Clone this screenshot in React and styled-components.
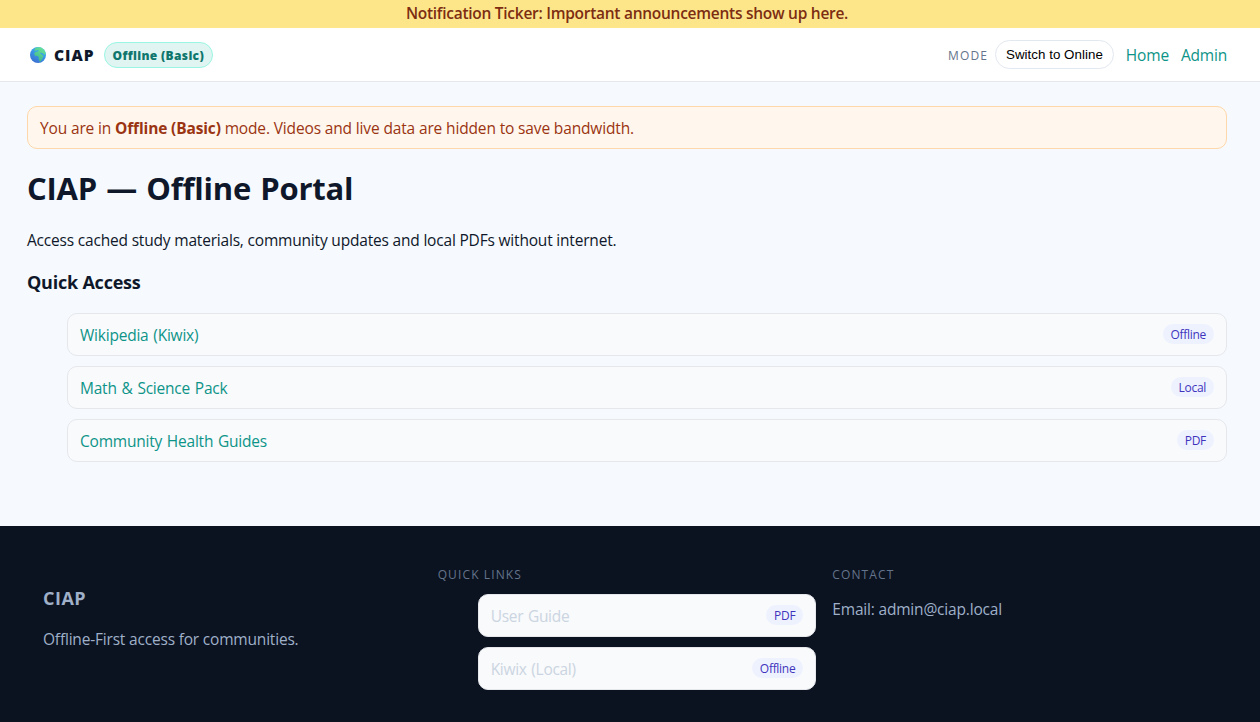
import React from 'react';
import styled, { createGlobalStyle } from 'styled-components';

const GlobalStyle = createGlobalStyle`
  * { box-sizing: border-box; }
  body {
    margin: 0;
    background: #f6fafe;
    color: #0f172a;
    font: 15.5px/21px "Segoe UI", "Open Sans", "Noto Sans", sans-serif;
    letter-spacing: -0.19px;
  }
  h1, h3, p, ul { margin: 0; padding: 0; }
  ul { list-style: none; }
  a { text-decoration: none; }
`;

const Page = styled.div`
  height: 722px;
  display: flex;
  flex-direction: column;
  overflow: hidden;
  white-space: nowrap;
`;

const Ticker = styled.div`
  height: 28px;
  padding: 0 6px 3px 0;
  display: flex;
  align-items: center;
  justify-content: center;
  background: #fde68a;
  color: #7c2d12;
  font-weight: 600;
  line-height: 22px;
  letter-spacing: -0.27px;
`;

const Header = styled.header`
  height: 54px;
  padding: 0 33px 0 27px;
  display: flex;
  align-items: center;
  justify-content: space-between;
  background: #fff;
  border-bottom: 1px solid #e5e7eb;
`;

const Brand = styled.div`
  display: flex;
  align-items: center;
  gap: 9px;
  padding-left: 3px;
`;

const BrandName = styled.div`
  display: flex;
  align-items: center;
  gap: 8px;
  font-weight: 800;
  letter-spacing: 1px;

  span { padding-top: 2px; }
`;

const Globe = styled.svg`
  width: 16px;
  height: 16px;
  display: block;
`;

const ModeBadge = styled.span`
  height: 26px;
  padding: 1px 8px 0;
  border: 1px solid #99f6e4;
  border-radius: 999px;
  background: #e0f5f1;
  color: #0f766e;
  font-size: 12px;
  font-weight: 800;
  line-height: 24px;
  letter-spacing: 0.33px;
`;

const Nav = styled.nav`
  display: flex;
  align-items: center;
  gap: 12px;
`;

const ModeGroup = styled.div`
  display: flex;
  align-items: center;
  gap: 7px;
`;

const Eyebrow = styled.div`
  color: #64748b;
  font-size: 12px;
  line-height: 16px;
  letter-spacing: 1.12px;
  text-transform: uppercase;
`;

const ModeLabel = styled(Eyebrow)`
  padding-top: 2px;
`;

const SwitchButton = styled.button`
  height: 29px;
  padding: 0 10px;
  border: 1px solid #e2e8f0;
  border-radius: 999px;
  background: #fff;
  color: #000;
  font: 13.333px/27px "Liberation Sans", Arial, sans-serif;
  letter-spacing: 0.03px;
`;

const NavLink = styled.a`
  padding-top: 2px;
  color: #0d9488;
`;

const Main = styled.main`
  height: 444px;
  padding: 24px 33px 0 27px;
`;

const Banner = styled.div`
  height: 43px;
  padding: 11px 12px 0;
  border: 1px solid #fed7aa;
  border-radius: 10px;
  background: #fff7ed;
  color: #9a3412;
  letter-spacing: -0.145px;
`;

const Title = styled.h1`
  margin-top: 18px;
  font-size: 31px;
  line-height: 43px;
  font-weight: 700;
  letter-spacing: -0.22px;
  word-spacing: 1.4px;
`;

const Lead = styled.p`
  margin-top: 20px;
`;

const Subtitle = styled.h3`
  margin-top: 19px;
  font-size: 18px;
  line-height: 25px;
  font-weight: 700;
  letter-spacing: -0.22px;
`;

const LinkList = styled.ul`
  display: grid;
  gap: 10px;
  margin-top: ${({ $top }) => $top}px;
  padding-left: 40px;
`;

const LinkItem = styled.li`
  height: 43px;
  padding: 0 12px;
  display: flex;
  align-items: center;
  justify-content: space-between;
  border: 1px solid #e5e7eb;
  border-radius: 10px;
  background: #f9fafc;
`;

const ItemLink = styled.a`
  padding-top: 2px;
  color: ${({ $muted }) => ($muted ? '#cbd5e1' : '#0d9488')};
  letter-spacing: ${({ $muted }) => ($muted ? '-0.3px' : '-0.22px')};
  word-spacing: 1px;
`;

const Tag = styled.span`
  height: 20px;
  padding: 0 8px;
  border-radius: 999px;
  background: #eef2ff;
  color: #3f34bd;
  font-size: 12px;
  line-height: 22px;
  margin-bottom: 1px;
  letter-spacing: -0.3px;
`;

const Footer = styled.footer`
  flex: 1;
  padding: 40px 49px 0 43px;
  display: grid;
  grid-template-columns: repeat(3, 1fr);
  gap: 16px;
  background: #0b1220;
  color: #9fb0c8;
`;

const FooterTitle = styled.h3`
  margin-top: 20px;
  font-size: 18px;
  line-height: 25px;
  letter-spacing: 0.5px;
`;

const FooterText = styled.p`
  margin-top: ${({ $top }) => $top}px;
`;

const FooterHeading = styled(Eyebrow)`
  margin-top: 1px;
`;

const resources = [
  ['Wikipedia (Kiwix)', 'Offline'],
  ['Math & Science Pack', 'Local'],
  ['Community Health Guides', 'PDF'],
];

const footerLinks = [
  ['User Guide', 'PDF'],
  ['Kiwix (Local)', 'Offline'],
];

function Links({ items, top, muted }) {
  return (
    <LinkList $top={top}>
      {items.map(([label, tag]) => (
        <LinkItem key={label}>
          <ItemLink $muted={muted}>{label}</ItemLink>
          <Tag>{tag}</Tag>
        </LinkItem>
      ))}
    </LinkList>
  );
}

function GlobeIcon() {
  return (
    <Globe viewBox="0 0 16 16">
      <defs>
        <linearGradient id="sea" x1="0.8" y1="0.1" x2="0.3" y2="1">
          <stop offset="0" stopColor="#35b5f5" />
          <stop offset="1" stopColor="#3b6fd0" />
        </linearGradient>
        <linearGradient id="land" x1="0.8" y1="0" x2="0.3" y2="1">
          <stop offset="0" stopColor="#6be59a" />
          <stop offset="1" stopColor="#3fb58a" />
        </linearGradient>
      </defs>
      <circle cx="8" cy="8" r="8" fill="url(#sea)" />
      <path
        fill="url(#land)"
        d="M5.4 1C7.4-.2 10.7-.2 12.8 1.7c1.6 1.3 2.6 3 2.8 4.8l-1 1.7-1.4-1.6-2.6-.8-.6.5 1.8 1.1 1.1 1.2.9.2-1.2 1.9-.5 1.6-1.6 2.1-1.1-.1-.8-2.7.1-1.6-1.2-.9-2-.1-1.3-1.5.4-1.9 1.5-.9 1.9-.3.9-.8-1.7-.3-1.9.4L4 3.5z"
      />
    </Globe>
  );
}

export default function App() {
  return (
    <>
      <GlobalStyle />
      <Page>
        <Ticker>Notification Ticker: Important announcements show up here.</Ticker>
        <Header>
          <Brand>
            <BrandName>
              <GlobeIcon />
              <span>CIAP</span>
            </BrandName>
            <ModeBadge>Offline (Basic)</ModeBadge>
          </Brand>
          <Nav>
            <ModeGroup>
              <ModeLabel>Mode</ModeLabel>
              <SwitchButton>Switch to Online</SwitchButton>
            </ModeGroup>
            <NavLink>Home</NavLink>
            <NavLink>Admin</NavLink>
          </Nav>
        </Header>
        <Main>
          <Banner>
            You are in <strong>Offline (Basic)</strong> mode. Videos and live data are hidden to save bandwidth.
          </Banner>
          <Title>CIAP — Offline Portal</Title>
          <Lead>Access cached study materials, community updates and local PDFs without internet.</Lead>
          <Subtitle>Quick Access</Subtitle>
          <Links items={resources} top={18} />
        </Main>
        <Footer>
          <div>
            <FooterTitle>CIAP</FooterTitle>
            <FooterText $top={18}>Offline-First access for communities.</FooterText>
          </div>
          <div>
            <FooterHeading>Quick Links</FooterHeading>
            <Links items={footerLinks} top={11} muted />
          </div>
          <div>
            <FooterHeading>Contact</FooterHeading>
            <FooterText $top={16}>Email: admin@ciap.local</FooterText>
          </div>
        </Footer>
      </Page>
    </>
  );
}
